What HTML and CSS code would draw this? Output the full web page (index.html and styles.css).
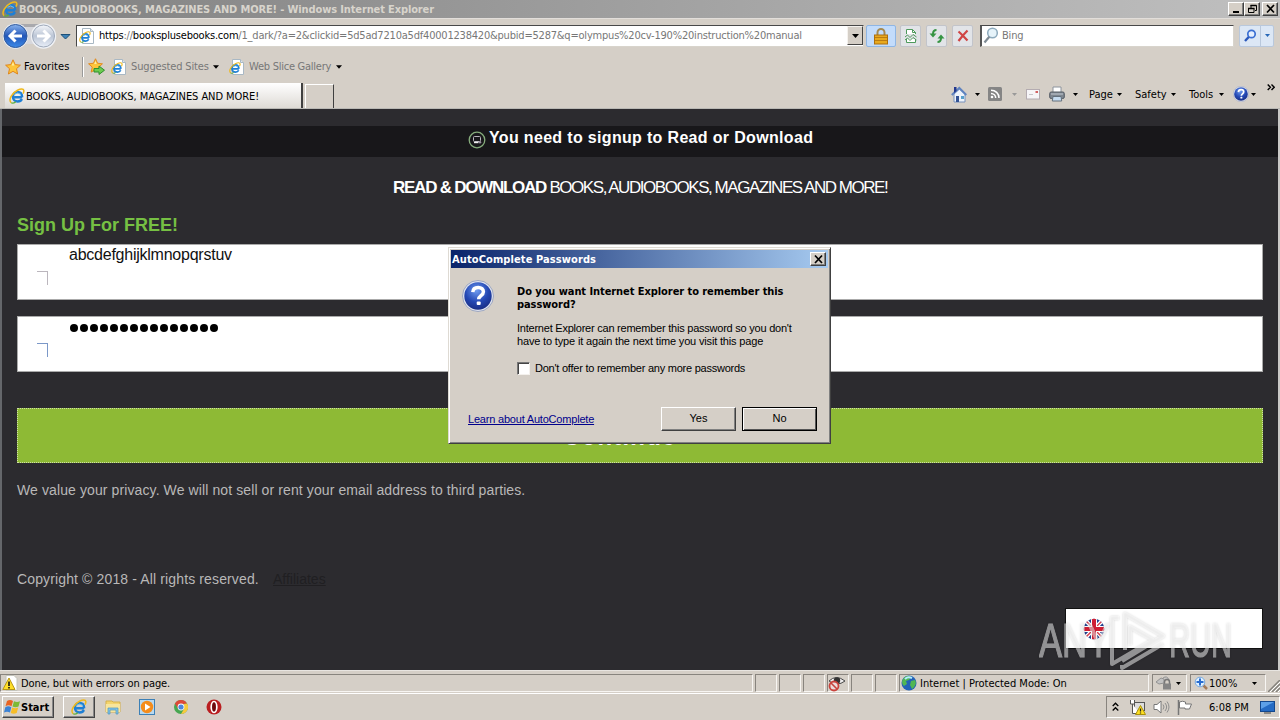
FILE: index.html
```html
<!DOCTYPE html>
<html lang="en">
<head>
<meta charset="utf-8">
<title>BOOKS, AUDIOBOOKS, MAGAZINES AND MORE!</title>
<link rel="stylesheet" href="styles.css">
</head>
<body>
<svg class="defs" aria-hidden="true">
  <defs>
    <linearGradient id="blue" x1="0" y1="0" x2="0" y2="1"><stop offset="0" stop-color="#8ab4ee"/><stop offset=".5" stop-color="#2356b8"/><stop offset="1" stop-color="#3c8ae8"/></linearGradient>
    <linearGradient id="pale" x1="0" y1="0" x2="0" y2="1"><stop offset="0" stop-color="#f4f6fa"/><stop offset=".5" stop-color="#bcc6d6"/><stop offset="1" stop-color="#e8eef8"/></linearGradient>
    <radialGradient id="orb" cx=".45" cy=".3" r=".7"><stop offset="0" stop-color="#6f9cf0"/><stop offset=".6" stop-color="#2448b4"/><stop offset="1" stop-color="#1a2f86"/></radialGradient>
    <symbol id="ie" viewBox="0 0 16 16">
      <path d="M13.2 9.2H5.2M13.2 9.2C13 5.8 11 4 8.6 4 5.800 4 3.900 6 3.900 8.800c0 2.800 2 4.700 4.800 4.700 2 0 3.500-.9 4.200-2.500" fill="none" stroke="#1f7fd4" stroke-width="2.400"/>
      <path d="M5.500 6.300Q8.500 3.500 12 6.500" fill="none" stroke="#6cc4f4" stroke-width="1"/>
      <path d="M2.200 14.800C-1 12 3 4.800 8.500 2.200c3.500-1.700 6-1.500 6.300.2.200 1-.2 2.200-.8 3.300" fill="none" stroke="#efb91c" stroke-width="1.500"/>
      <path d="M2.200 14.800c1.300.8 3.300 0 4.600-1" fill="none" stroke="#5eae3a" stroke-width="1.300"/>
    </symbol>
    <symbol id="iepage" viewBox="0 0 16 16">
      <path d="M3.500.5h8l3 3v12h-11z" fill="#fff" stroke="#a9b8c4"/><path d="M11.500.5v3h3" fill="#dce6ee" stroke="#a9b8c4"/>
      <use href="#ie" x="0" y="3" width="12" height="12"/>
    </symbol>
    <symbol id="star" viewBox="0 0 16 16"><path d="M8 .8l2.200 4.800 5.200.6-3.900 3.500 1.100 5.300L8 12.300 3.400 15l1.100-5.300L.6 6.200l5.200-.6z" fill="#fdc53a" stroke="#e0861c"/><path d="M8 3l1.300 3.500H6.600z" fill="#fff0a0"/></symbol>
    <symbol id="help" viewBox="0 0 32 32"><circle cx="16" cy="16" r="15.500" fill="#dfe3ee" stroke="#8e99b8" stroke-width=".8"/><circle cx="16" cy="16" r="13.700" fill="url(#orb)"/><path d="M10.800 12.200c.2-3.200 2.400-4.800 5.400-4.800 3.200 0 5.200 1.800 5.200 4.300 0 4-4.700 4-4.700 7.600" fill="none" stroke="#fff" stroke-width="3.500"/><rect x="14.700" y="21.500" width="4" height="3.600" rx="1" fill="#fff"/></symbol>
    <symbol id="arrow" viewBox="0 0 7 4"><path d="M0 0h7L3.500 4z" fill="currentColor"/></symbol>
  </defs>
</svg>

<header class="titlebar">
  <svg class="i16"><use href="#ie"/></svg>
  <span class="t-title">BOOKS, AUDIOBOOKS, MAGAZINES AND MORE! - Windows Internet Explorer</span>
  <div class="winbtns">
    <i class="wb"><svg width="13" height="10"><path d="M3 8h6" stroke="#000" stroke-width="2"/></svg></i>
    <i class="wb"><svg width="13" height="10"><path d="M5 1.500h5.500v5H9M5 1v3M2.500 4.500H8v4H2.500z" fill="none" stroke="#000"/><path d="M4.500 1.500h6M2 4.500h6.500" stroke="#000" stroke-width="1.600"/></svg></i>
    <i class="wb close"><svg width="13" height="10"><path d="M3 1l7 7.500M10 1L3 8.500" stroke="#000" stroke-width="1.700"/></svg></i>
  </div>
</header>

<nav class="nav">
  <svg class="navarrows" width="72" height="28" viewBox="0 0 72 28">
    <rect x="12" y="2" width="34" height="6" fill="#a9a9ad"/>
    <rect x="12" y="5" width="34" height="17" fill="#d6d7dc"/>
    <circle cx="15.500" cy="14" r="12.700" fill="#e8edf4"/><circle cx="15.500" cy="14" r="11.500" fill="url(#blue)" stroke="#31599b"/>
    <path d="M22 14H11M15.500 8.500L10 14l5.500 5.500" stroke="#fff" stroke-width="3" fill="none"/>
    <circle cx="43.500" cy="14" r="12.700" fill="#eff1f5"/><circle cx="43.500" cy="14" r="11" fill="url(#pale)" stroke="#9ea9ba"/>
    <path d="M37 14h11M43.500 8.500L49 14l-5.500 5.500" stroke="#fff" stroke-width="3" fill="none"/>
    <path d="M61 12.500h9L65.500 17z" fill="#3e83b8" stroke="#1d5078"/>
  </svg>
  <div class="address">
    <svg class="i16"><use href="#iepage"/></svg>
    <span class="t-url"><b>https</b>://<b>booksplusebooks.com</b>/1_dark/?a=2&amp;clickid=5d5ad7210a5df40001238420&amp;pubid=5287&amp;q=olympus%20cv-190%20instruction%20manual</span>
    <i class="drop"><svg width="7" height="4"><use href="#arrow"/></svg></i>
  </div>
  <i class="tb lock"><svg width="16" height="18" viewBox="0 0 16 18"><path d="M4.500 9V5.500a3.500 3.500 0 017 0V9" fill="none" stroke="#a58a52" stroke-width="2"/><rect x="1.500" y="8" width="13" height="9" fill="#e8a91e" stroke="#ad6f0d"/><path d="M2 10.500h12M2 13.500h12" stroke="#bb7c10"/></svg></i>
  <i class="tb compat"><svg width="14" height="16" viewBox="0 0 14 16"><path d="M2.500 6V1.500h6l3 3V6M2.500 11v3.500h9V11" fill="#fff" stroke="#4e9a5c"/><path d="M8.500 1.500v3h3M1 9l2.500-2L6 9.500 9 6.500 12.500 9M1 12l2.500-2L6 12.500 9 9.500l3.500 2.500" fill="none" stroke="#4e9a5c"/></svg></i>
  <i class="tb refresh"><svg width="16" height="16" viewBox="0 0 16 16"><path d="M7.500 2C5 2 4 3.500 4 6" fill="none" stroke="#369443" stroke-width="2"/><path d="M.5 5.500h7L4 9.500z" fill="#369443"/><path d="M8.500 14c2.500 0 3.500-1.500 3.500-4" fill="none" stroke="#369443" stroke-width="2"/><path d="M8.500 10.500h7L12 6.500z" fill="#369443"/></svg></i>
  <i class="tb stop"><svg width="14" height="14" viewBox="0 0 14 14"><path d="M2.500 2.500c3 2.500 5.500 5.500 9 9M11.500 1.500C8 5 5 8.500 2.500 12" stroke="#d04444" stroke-width="2.200" fill="none"/></svg></i>
  <div class="search">
    <svg width="16" height="18" viewBox="0 0 16 18"><circle cx="9.500" cy="6" r="4.800" fill="#e6f3fa" stroke="#8daabd" stroke-width="1.500"/><path d="M6.300 9.700L1.500 15.500" stroke="#7f8b94" stroke-width="2.200"/></svg>
    <span class="t-bing">Bing</span>
  </div>
  <div class="go"><i><svg width="14" height="14" viewBox="0 0 14 14"><circle cx="8.500" cy="5" r="3.700" fill="#e5efff" stroke="#3b6fd2" stroke-width="1.700"/><path d="M5.700 8L2 12" stroke="#2b58bc" stroke-width="2.400"/></svg></i><i class="godrop"><svg width="5" height="3"><use href="#arrow"/></svg></i></div>
</nav>

<div class="favbar">
  <svg class="i16"><use href="#star"/></svg>
  <span class="t-fav">Favorites</span>
  <i class="sep"></i>
  <svg class="addfav" width="17" height="17" viewBox="0 0 17 17"><use href="#star" width="15" height="15"/><path d="M6 10.500h5V8l5.500 4.200L11 16.500V14H6z" fill="#6ccb50" stroke="#2f8f2d"/></svg>
  <svg class="i16 g1"><use href="#iepage"/></svg>
  <span class="t-sug">Suggested Sites</span>
  <svg class="ar" width="6" height="4"><use href="#arrow"/></svg>
  <svg class="i16 g2"><use href="#iepage"/></svg>
  <span class="t-slice">Web Slice Gallery</span>
  <svg class="ar" width="6" height="4"><use href="#arrow"/></svg>
</div>

<div class="tabs">
  <div class="tab"><svg class="i16"><use href="#ie"/></svg><span class="t-tab">BOOKS, AUDIOBOOKS, MAGAZINES AND MORE!</span></div>
  <div class="newtab"></div>
  <div class="cmd">
    <svg width="16" height="17" viewBox="0 0 16 17"><path d="M3 8v8h11V8L8.500 3z" fill="#edf3fb" stroke="#7892bd"/><path d="M.8 9L8.300 2l7 7" fill="none" stroke="#5f83bf" stroke-width="2"/><path d="M3 1h2.500v4L3 7z" fill="#23388e"/><rect x="5" y="10" width="3" height="6" fill="#325294"/><rect x="10" y="10" width="3" height="3" fill="#58a0cc"/></svg>
    <svg class="ar a1" width="5" height="3"><use href="#arrow"/></svg>
    <svg class="rss" width="14" height="14" viewBox="0 0 14 14"><rect width="14" height="14" rx="1.500" fill="#858585"/><path d="M3 3.200c4.500 0 8 3.300 8 7.800M3 6.400c2.700 0 4.700 2 4.700 4.600" fill="none" stroke="#fff" stroke-width="1.500"/><circle cx="4" cy="10" r="1.300" fill="#fff"/></svg>
    <svg class="ar a2" width="5" height="3"><use href="#arrow"/></svg>
    <svg class="mail" width="14" height="11" viewBox="0 0 14 11"><rect x=".5" y=".5" width="13" height="9.500" fill="#f6f5f7" stroke="#b4acb1"/><rect x="9.500" y="2" width="2.500" height="2" fill="#d26161"/><path d="M3 5.500h4" stroke="#c6c4c8"/></svg>
    <svg class="print" width="16" height="16" viewBox="0 0 16 16"><path d="M4 7V1h8v6" fill="#fff" stroke="#8c939c"/><rect x=".7" y="6" width="14.600" height="6.500" rx="1.500" fill="#7e868f" stroke="#555c65"/><path d="M2 8h12" stroke="#c3cad2"/><path d="M4 10.500h8L12.700 15H3.300z" fill="#c5dbef" stroke="#64717d"/></svg>
    <svg class="ar a3" width="5" height="3"><use href="#arrow"/></svg>
    <span class="t-page">Page</span><svg class="ar" width="5" height="3"><use href="#arrow"/></svg>
    <span class="t-safe">Safety</span><svg class="ar" width="5" height="3"><use href="#arrow"/></svg>
    <span class="t-tools">Tools</span><svg class="ar" width="5" height="3"><use href="#arrow"/></svg>
    <svg class="i16 helpic"><use href="#help"/></svg><svg class="ar" width="5" height="3"><use href="#arrow"/></svg>
    <svg class="chev" width="8" height="7" viewBox="0 0 8 7"><path d="M.7.5l2.700 2.700L.7 6M4.500.5l2.700 2.700L4.500 6" fill="none" stroke="#000" stroke-width="1.400"/></svg>
  </div>
</div>

<main class="page">
  <div class="banner">
    <svg width="18" height="18" viewBox="0 0 18 18"><circle cx="9" cy="9" r="7.800" fill="none" stroke="#86ac7c" stroke-width="1.300"/><rect x="5.500" y="5.500" width="7" height="5" rx="1" fill="none" stroke="#b9b5bd"/><path d="M6 11.500h4.500" stroke="#eee" stroke-width="1.400"/><circle cx="12" cy="11.300" r="1.200" fill="#9a8fa0"/></svg>
    <span class="t-need">You need to signup to Read or Download</span>
  </div>
  <div class="headline"><span class="t-head"><b>READ &amp; DOWNLOAD</b> BOOKS, AUDIOBOOKS, MAGAZINES AND MORE!</span></div>
  <h1 class="signup"><span class="t-sign">Sign Up For FREE!</span></h1>
  <div class="field"><i class="corner"></i><span class="t-abc">abcdefghijklmnopqrstuv</span></div>
  <div class="field second"><i class="corner bluecorner"></i>
    <span class="dots"><i></i><i></i><i></i><i></i><i></i><i></i><i></i><i></i><i></i><i></i><i></i><i></i><i></i><i></i><i></i></span></div>
  <div class="continue"><span class="t-cont">Continue</span></div>
  <p class="privacy"><span class="t-priv">We value your privacy. We will not sell or rent your email address to third parties.</span></p>
  <footer class="foot"><span class="t-copy">Copyright © 2018 - All rights reserved.</span><a class="t-aff">Affiliates</a></footer>
  <div class="lang"><svg width="22" height="22" viewBox="0 0 22 22"><clipPath id="round"><circle cx="11" cy="11" r="10.300"/></clipPath><g clip-path="url(#round)"><rect width="22" height="22" fill="#23418e"/><path d="M0 0l22 22M22 0L0 22" stroke="#fff" stroke-width="4"/><path d="M0 0l22 22M22 0L0 22" stroke="#d53b4c" stroke-width="1.400"/><path d="M11 0v22M0 11h22" stroke="#fff" stroke-width="6"/><path d="M11 0v22M0 11h22" stroke="#d01f35" stroke-width="4"/></g></svg></div>
</main>

<div class="status">
  <div class="pane msg"><svg class="i16" viewBox="0 0 16 16"><path d="M4 .5h8l3 3v12H4z" fill="#fff" stroke="#c4c4bc"/><path d="M7 3l6 11.500H.8z" fill="#ffdf28" stroke="#b89614"/><path d="M7 6.500V11M7 12v1.500" stroke="#111" stroke-width="1.600"/></svg><span class="t-done">Done, but with errors on page.</span></div>
  <div class="pane sm"></div><div class="pane sm"></div><div class="pane sm"></div>
  <div class="pane sm"><svg width="18" height="17" viewBox="0 0 18 17"><path d="M1 6Q8-1 17 6 9 12 1 6z" fill="#f0eeee" stroke="#484848"/><circle cx="9" cy="5.500" r="3.200" fill="#333"/><circle cx="6" cy="11" r="4.500" fill="#eadada" stroke="#c9423c" stroke-width="1.800"/><path d="M3 8l6 6" stroke="#c9423c" stroke-width="1.600"/></svg></div>
  <div class="pane sm"></div><div class="pane sm"></div>
  <div class="pane zone"><svg class="i16" viewBox="0 0 16 16"><circle cx="8" cy="8" r="7.500" fill="#2362b7"/><path d="M3 3c2-3 7-2 7-1L8 5 5 6l1 3-3 2C0 8 1 5 3 3zM10 6l4-1c2 3 0 7-3 9l-2-4z" fill="#51b752"/><path d="M4 4q3-3 7-1" stroke="#b3edff" stroke-width="2" fill="none"/></svg><span class="t-zone">Internet | Protected Mode: On</span></div>
  <div class="pane prot"><svg width="18" height="16" viewBox="0 0 18 16"><path d="M1 7l5-4 3 1v4l-5 1zM8 3q4-3 6 2" fill="#c2c2c2" stroke="#929292"/><path d="M9.500 9V7a2.500 2.500 0 015 0v2" fill="none" stroke="#777" stroke-width="1.500"/><rect x="8" y="8.500" width="8" height="6" fill="#858585"/></svg><svg class="ar" width="5" height="3"><use href="#arrow"/></svg></div>
  <div class="pane zoomp"><svg width="15" height="15" viewBox="0 0 15 15"><path d="M8 8l5 5" stroke="#a47b59" stroke-width="2.500"/><circle cx="6" cy="6" r="4.800" fill="#dff1ff" stroke="#78a8dc"/><path d="M6 2.500v7M2.500 6h7" stroke="#286cd0" stroke-width="2"/></svg><span class="t-zoom">100%</span><svg class="ar" width="5" height="3"><use href="#arrow"/></svg></div>
  <svg class="grip" width="12" height="12" viewBox="0 0 12 12"><path d="M0 12L12 0M4 12l8-8M8 12l4-4" stroke="#85827c" stroke-width="1.500"/><path d="M2 12L12 2M6 12l6-6M10 12l2-2" stroke="#fff"/></svg>
</div>

<div class="taskbar">
  <div class="start"><svg width="17" height="16" viewBox="0 0 17 16"><path d="M3 2q3-2 6 0L7.500 7.200q-3-1.700-6 0z" fill="#e96322"/><path d="M10 2.300q3 1.500 6 0L14.500 7.500q-3 1.500-6 0z" fill="#7dba35"/><path d="M1.300 8.200q3-1.700 6 0L6 13.500q-3-1.700-6 0z" fill="#3b82d5"/><path d="M8.200 8.500q3 1.500 6 0L12.700 14q-3 1.500-6 0z" fill="#f6bd28"/></svg><span class="t-start">Start</span></div>
  <div class="task"><svg class="i16"><use href="#ie"/></svg></div>
  <svg class="q1" width="16" height="16" viewBox="0 0 16 16"><path d="M1 2h6l1 1h7v10H1z" fill="#f4d56d" stroke="#d4b04c"/><path d="M1 5h14v8H1z" fill="#f8e59c"/><path d="M3 15V9h10v6h-2v-4H5v4z" fill="#83c4e6" stroke="#4e97bd" stroke-width=".7"/></svg>
  <svg class="q2" width="16" height="16" viewBox="0 0 16 16"><rect x=".5" y=".5" width="15" height="15" fill="#b8d9f0" stroke="#3c80b6"/><circle cx="8" cy="8" r="6.200" fill="#f48c1b"/><path d="M6 4.500l5.500 3.500L6 11.500z" fill="#fff"/></svg>
  <svg class="q3" width="14" height="14" viewBox="0 0 14 14"><circle cx="7" cy="7" r="7" fill="#46a650"/><path d="M.9 3.500A7 7 0 0113.100 3.500L7 4.500 4 8.500z" fill="#dd4938"/><path d="M13.100 3.500A7 7 0 017 14l3-5V4z" fill="#f7ca3d"/><circle cx="7" cy="7" r="3.400" fill="#fff"/><circle cx="7" cy="7" r="2.600" fill="#4c86dc"/></svg>
  <svg class="q4" width="16" height="16" viewBox="0 0 16 16"><circle cx="8" cy="8" r="7.500" fill="#ba1e20"/><ellipse cx="8" cy="8" rx="2.800" ry="5.500" fill="#6e090c" stroke="#fff" stroke-width="1.700"/></svg>
  <div class="tray">
    <svg width="7" height="10" viewBox="0 0 7 10"><path d="M.7 4L3.500 1.200 6.300 4M.7 8.500l2.800-2.800 2.800 2.800" fill="none" stroke="#000" stroke-width="1.300"/></svg>
    <svg class="net" width="17" height="16" viewBox="0 0 17 16"><rect x="5.500" y="3.500" width="10" height="8" fill="#ddd" stroke="#555"/><path d="M1.500 1v4h4V1M3.500 5v9.500h7" fill="#fff" stroke="#555"/><path d="M11.500 6.500l5 9h-10z" fill="#ffdf20" stroke="#a9900b"/><path d="M11.500 9.500v3M11.500 13.500v1" stroke="#222" stroke-width="1.300"/></svg>
    <svg class="vol" width="17" height="14" viewBox="0 0 17 14"><path d="M1 4.500h3L8 1v12L4 9.500H1z" fill="#fff" stroke="#777"/><path d="M10 4.500q2 2.500 0 5M12 3q3.300 4 0 8M14 1.500q4 5.500 0 11" fill="none" stroke="#8e8e8e"/></svg>
    <svg class="flag" width="16" height="15" viewBox="0 0 16 15"><path d="M1.500 0v15" stroke="#777" stroke-width="1.500"/><path d="M2.500 2q3-1.500 6 0v2h6l-2 5H8V8H2.500z" fill="#fff" stroke="#777"/></svg>
    <span class="t-time">6:08 PM</span>
    <svg class="desk" width="15" height="13" viewBox="0 0 15 13"><rect x=".5" y=".5" width="14" height="10" fill="#256bc4" stroke="#14488d"/><path d="M1 1h13L1 8z" fill="#5da0e8"/><path d="M4 12h7" stroke="#444"/></svg>
  </div>
</div>

<section class="dialog">
  <div class="dtitle"><span class="t-dt">AutoComplete Passwords</span><i class="wb dclose"><svg width="13" height="11"><path d="M3 1.500l7 7.500M10 1.500L3 9" stroke="#000" stroke-width="1.700"/></svg></i></div>
  <div class="dbody">
    <svg class="dq" width="32" height="32"><use href="#help"/></svg>
    <div class="dtext">
      <div class="strong"><span class="t-d1">Do you want Internet Explorer to remember this</span><span class="t-d2">password?</span></div>
      <div class="plain"><span class="t-d3">Internet Explorer can remember this password so you don't</span><span class="t-d4">have to type it again the next time you visit this page</span></div>
      <div class="check"><i class="box"></i><span class="t-d5">Don't offer to remember any more passwords</span></div>
    </div>
  </div>
  <div class="dfoot"><a class="t-learn">Learn about AutoComplete</a><div class="btn yes">Yes</div><div class="btn no">No</div></div>
</section>

<svg class="watermark" width="240" height="64" viewBox="0 0 240 64">
  <g opacity=".5" fill="#fff" stroke="#fff" stroke-width="1.200" font-family="Liberation Sans Narrow, Liberation Sans, sans-serif" font-size="48">
    <text x="0" y="49" textLength="71" lengthAdjust="spacingAndGlyphs">ANY</text>
    <text x="130" y="49" textLength="63" lengthAdjust="spacingAndGlyphs">RUN</text>
  </g>
  <g opacity=".5" fill="none" stroke="#fff" stroke-width="4" stroke-linejoin="round">
    <path d="M86 42V6l38 22-41 25"/><path d="M80 10h-7v46l41-24-23-13v18"/><path d="M83 57v3l41-24"/>
  </g>
</svg>
</body>
</html>
```
FILE: styles.css
```css
* { box-sizing: border-box; }
body { margin: 0; width: 1280px; height: 720px; overflow: hidden; position: relative; display: flex; flex-direction: column; background: #d5cfc7; color: #000; font: 11px/13px "DejaVu Sans Condensed", "DejaVu Sans", sans-serif; }
svg { display: block; flex: none; }
i { font-style: normal; display: block; flex: none; }
span, a { white-space: nowrap; display: block; flex: none; }
span b { display: inline; }
.defs { position: absolute; width: 0; height: 0; }
.i16 { width: 16px; height: 16px; }

.titlebar { height: 18px; flex: none; display: flex; align-items: center; padding: 0 2px; background: linear-gradient(90deg, #808080, #c0c0c0); color: #d8d4cc; }
.t-title { width: 420px; margin-left: 1px; font-weight: bold; letter-spacing: -.13px; }
.winbtns { margin-left: auto; display: flex; }
.wb { width: 16px; height: 14px; padding: 1px; background: #d5cfc7; border: 1px solid; border-color: #fff #404040 #404040 #fff; box-shadow: inset -1px -1px #808080; }
.close { margin-left: 2px; }

.nav { height: 36px; flex: none; display: flex; align-items: center; border-top: 1px solid #e2deda; padding-bottom: 2px; }
.address { margin-left: 4px; width: 788px; height: 22px; background: #fff; border: 1px solid #d8d4cc; border-top: 1px solid #484848; border-left: 1px solid #484848; display: flex; align-items: center; padding-left: 2px; }
.t-url { margin-left: 4px; width: 752px; color: #777; letter-spacing: -.205px; }
.t-url b { color: #000; font-weight: normal; }
.drop { width: 16px; height: 19px; margin-left: -4px; padding: 7px 0 0 4px; background: #d5cfc7; border: 1px solid; border-color: #f5f2ee #444 #444 #f5f2ee; }
.tb { width: 21px; height: 22px; border: 1px solid #c2c4ca; border-radius: 2px; background: #e2e4e8; display: flex; align-items: center; justify-content: center; }
.lock { width: 30px; margin-left: 2px; background: #c3dcfb; border-color: #8fb6e4; }
.compat { margin-left: 4px; }
.refresh, .stop { margin-left: 5px; }
.search { margin-left: 7px; width: 254px; height: 22px; background: #fff; border: 1px solid #d8d4cc; border-top-color: #484848; border-left: 2px solid #555; display: flex; align-items: center; padding-left: 1px; }
.t-bing { margin-left: 3px; color: #777; letter-spacing: -.2px; }
.go { margin-left: 5px; width: 35px; height: 22px; display: flex; border: 1px solid #b9c8dc; background: #dce7f5; border-radius: 2px; }
.go i { width: 20px; display: flex; align-items: center; justify-content: center; }
.go .godrop { width: 13px; border-left: 1px solid #b9c8dc; color: #2767b7; }

.favbar { height: 27px; flex: none; display: flex; align-items: center; padding: 0 0 2px 5px; }
.t-fav { width: 49px; margin-left: 3px; letter-spacing: .1px; }
.sep { width: 2px; height: 20px; margin-left: 9px; border-left: 1px solid #999; border-right: 1px solid #fff; }
.addfav { margin-left: 4px; }
.g1 { margin-left: 6px; }
.t-sug, .t-slice { color: #777; margin-left: 4px; }
.t-sug { width: 78px; letter-spacing: -.15px; }
.t-slice { width: 82px; letter-spacing: -.25px; }
.favbar .ar { margin-left: 4px; }
.g2 { margin-left: 10px; }
.t-slice + .ar { margin-left: 5px; }

.tabs { height: 28px; flex: none; display: flex; border-bottom: 1px solid #b9b8b4; }
.tab { margin: 2px 0 0 5px; width: 298px; height: 25px; background: linear-gradient(#fff, #dedad5); border-right: 2px solid #404040; display: flex; align-items: center; padding: 1px 0 0 4px; }
.t-tab { margin-left: 1px; width: 238px; letter-spacing: -.06px; }
.newtab { margin: 3px 0 0 2px; width: 29px; height: 24px; border-top: 1px solid #fff; border-left: 1px solid #fff; border-right: 1px solid #404040; }
.cmd { margin-left: auto; width: 329px; display: flex; align-items: center; padding-bottom: 1px; }
.a1 { margin-left: 8px; }
.rss { margin-left: 8px; }
.a2 { margin-left: 10px; color: #999; }
.mail { margin-left: 9px; }
.print { margin-left: 9px; }
.a3 { margin-left: 8px; }
.t-page { margin-left: 11px; width: 28px; }
.t-safe { margin-left: 13px; width: 36px; }
.t-tools { margin-left: 13px; width: 30px; }
.helpic { margin-left: 9px; }
.helpic + .ar { margin-left: 2px; }
.chev { margin: -13px 0 0 11px; }

.page { height: 561px; flex: none; display: flex; flex-direction: column; background: #2c2b2f; border-left: 2px solid #65676b; border-right: 2px solid #c9c8c6; font-family: "Liberation Sans", sans-serif; }
.banner { margin-top: 17px; height: 31px; flex: none; background: #18171a; color: #fff; display: flex; padding: 5px 0 0 466px; }
.t-need { margin: -3px 0 0 3px; font: bold 16px/19px "Liberation Sans", sans-serif; letter-spacing: .33px; }
.headline { margin: 21px 0 0 391px; color: #fff; }
.t-head { font-size: 17px; line-height: 20px; letter-spacing: -1.45px; }
.t-head b { letter-spacing: -1.25px; }
.signup { margin: 17px 0 0 15px; font-size: 18px; line-height: 20px; color: #76c043; }
.field { margin: 9px 15px 0; height: 56px; flex: none; background: #fff; border: 1px solid #aaa; display: flex; }
.second { margin-top: 16px; }
.corner { width: 11px; height: 14px; margin: 26px 0 0 19px; border-top: 1px solid #bbb6bd; border-right: 1px solid #bbb6bd; }
.bluecorner { border-top-color: #7b98c8; border-right-color: #7b98c8; }
.t-abc { margin: 1px 0 0 21px; font-size: 16px; line-height: 18px; color: #111; letter-spacing: -.24px; }
.dots { display: flex; gap: 2px; margin: 7px 0 0 22px; }
.dots i { width: 8px; height: 8px; border-radius: 4px; background: #000; }
.continue { margin: 36px 15px 0; height: 55px; flex: none; background: #8eba35; border: 1px dotted #cfe0a8; color: #fff; }
.t-cont { font-weight: bold; font-size: 24px; line-height: 28px; margin: 14px 0 0 545px; letter-spacing: 1.2px; }
.privacy { margin: 19px 0 0 15px; color: #b9b8b8; }
.t-priv, .t-copy, .t-aff { font-size: 14px; line-height: 16px; }
.t-priv { letter-spacing: .105px; }
.foot { margin: 73px 0 0 15px; display: flex; color: #b9b8b8; }
.t-copy { width: 256px; letter-spacing: .13px; }
.t-aff { color: #201f22; text-decoration: underline; }
.lang { align-self: flex-end; margin: 21px 15px 0 0; width: 198px; height: 41px; background: #fff; border: 1px solid #111; padding: 9px 0 0 17px; }

.status { height: 24px; flex: none; display: flex; align-items: flex-start; padding-top: 3px; border-bottom: 1px solid #fff; border-top: 1px solid #e8e5e1; }
.pane { height: 18px; margin-right: 2px; border: 1px solid; border-color: #88847e #f7f5f2 #f7f5f2 #88847e; display: flex; align-items: center; }
.msg { width: 753px; padding-left: 1px; }
.t-done { margin-left: 3px; letter-spacing: -.08px; }
.sm { width: 22px; }
.zone { width: 250px; padding-left: 1px; }
.t-zone { margin-left: 3px; }
.prot { width: 35px; margin-left: 1px; padding-left: 2px; }
.prot .ar { margin-left: 3px; }
.zoomp { width: 76px; margin-left: 1px; padding-left: 3px; }
.t-zoom { width: 29px; margin-left: 0; }
.zoomp .ar { margin-left: 14px; }
.grip { margin: 6px 0 0 0; }

.taskbar { height: 26px; flex: none; display: flex; align-items: center; padding-left: 2px; }
.start { width: 52px; height: 22px; border: 1px solid; border-color: #fff #444 #444 #fff; box-shadow: inset -1px -1px #888; display: flex; align-items: center; padding-left: 1px; }
.t-start { margin-left: 0; font-weight: bold; }
.task { margin-left: 9px; width: 32px; height: 22px; border: 1px solid; border-color: #fff #444 #444 #fff; box-shadow: inset -1px -1px #888; display: flex; justify-content: center; align-items: center; }
.q1 { margin-left: 10px; }
.q2 { margin-left: 18px; }
.q3 { margin-left: 19px; }
.q4 { margin-left: 18px; }
.tray { margin-left: auto; width: 174px; height: 22px; display: flex; align-items: center; padding-left: 5px; border: 1px solid; border-color: #88847e #fff #fff #88847e; }
.net { margin-left: 10px; }
.vol { margin-left: 7px; }
.flag { margin-left: 7px; }
.t-time { width: 40px; margin-left: 16px; }
.desk { margin-left: 11px; }

.dialog { position: absolute; left: 448px; top: 247px; width: 383px; height: 197px; background: #d5cfc7; border: 1px solid; border-color: #dedad3 #404040 #404040 #dedad3; box-shadow: inset 1px 1px #fff, inset -1px -1px #808080; padding: 2px; display: flex; flex-direction: column; }
.dtitle { height: 18px; flex: none; display: flex; align-items: center; justify-content: space-between; padding: 0 2px 0 1px; color: #fff; font-weight: bold; background: linear-gradient(90deg, #0a246a, #a6caf0); }
.t-dt { letter-spacing: .1px; }
.dbody { display: flex; height: 128px; padding: 12px 0 0 11px; flex: none; }
.dtext { margin-left: 23px; padding-top: 5px; }
.strong { font-weight: bold; letter-spacing: -.07px; }
.plain { margin-top: 11px; letter-spacing: -.23px; }
.t-d4 { letter-spacing: -.16px; }
.plain, .check, .dfoot { font-family: "Liberation Sans", sans-serif; }
.check { display: flex; margin-top: 13px; align-items: center; letter-spacing: -.24px; }
.box { width: 13px; height: 13px; background: #fff; border: 1px solid; border-color: #777 #f4f1ed #f4f1ed #777; box-shadow: inset 1px 1px #444; }
.t-d5 { margin: 1px 0 0 5px; }
.dfoot { display: flex; padding: 11px 0 0 17px; }
.t-learn { width: 193px; margin-top: 6px; color: #00008c; text-decoration: underline; letter-spacing: -.2px; }
.btn { width: 75px; height: 24px; padding-top: 4px; text-align: center; border: 1px solid; border-color: #fff #404040 #404040 #fff; box-shadow: inset -1px -1px #808080; }
.no { margin-left: 6px; border-color: #000; box-shadow: inset 1px 1px #fff, inset -1px -1px #555; }
.watermark { position: absolute; left: 1039px; top: 608px; filter: drop-shadow(0 0 1px rgba(0, 0, 0, .3)); }
```
